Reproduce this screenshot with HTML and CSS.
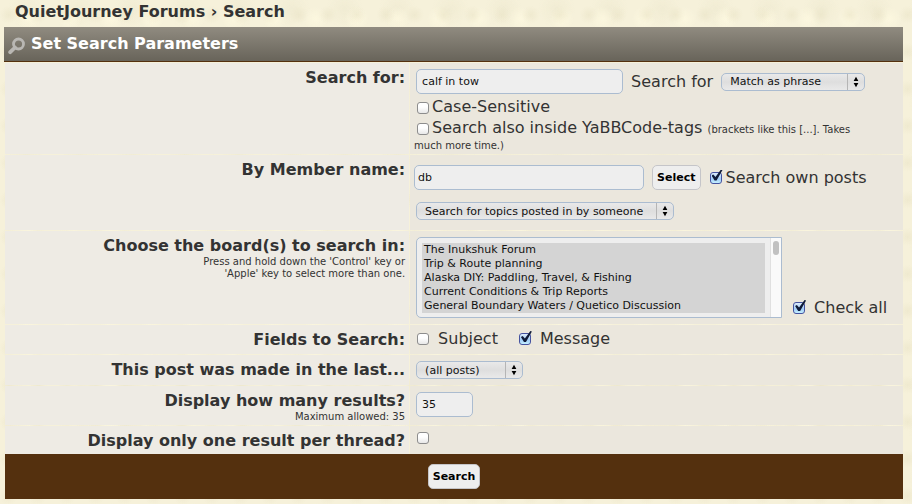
FILE: index.html
```html
<!DOCTYPE html>
<html lang="en">
<head>
    <meta charset="UTF-8">
    <meta name="viewport" content="width=device-width, initial-scale=1.0">
    <title>QuietJourney Forums - Search</title>
    <link rel="stylesheet" href="styles.css">
</head>
<body>
    <h1 class="breadcrumb">QuietJourney Forums › Search</h1>

    <form class="search-form">
        <h2 class="title-bar">
            <svg class="magnifier" width="18" height="18" viewBox="0 0 18 18">
                <circle cx="10.500" cy="7" r="5" fill="none" stroke="#b9b7b3" stroke-width="2.800"/>
                <path d="M7 10.500L2.200 15.200" stroke="#b9b7b3" stroke-width="3.800" stroke-linecap="round"/>
            </svg>
            Set Search Parameters
        </h2>

        <div class="row">
            <div class="name"><label for="search">Search for:</label></div>
            <div class="field search-field">
                <div class="line">
                    <input type="text" id="search" class="search-text" value="calf in tow">
                    <label for="searchtype">Search for</label>
                    <span class="dropdown match">
                        <select id="searchtype"><option>Match as phrase</option></select>
                        <svg class="arrows" width="17" height="16" viewBox="0 0 17 16"><path d="M8.500 2.500L11 7H6zM8.500 13.500L6 9H11z"/></svg>
                    </span>
                </div>
                <div class="check-line">
                    <input type="checkbox" id="casesensitive"><label for="casesensitive">Case-Sensitive</label>
                </div>
                <div class="check-line">
                    <input type="checkbox" id="yabbtags"><label for="yabbtags">Search also inside YaBBCode-tags <span class="small">(brackets like this [...]. Takes much more time.)</span></label>
                </div>
            </div>
        </div>

        <div class="row">
            <div class="name"><label for="member">By Member name:</label></div>
            <div class="field member-field">
                <div class="line">
                    <input type="text" id="member" class="member-text" value="db">
                    <button type="button">Select</button>
                    <span class="check">
                        <input type="checkbox" id="own" checked>
                        <label for="own">Search own posts</label>
                    </span>
                </div>
                <span class="dropdown topics">
                    <select aria-label="Topics to search"><option>Search for topics posted in by someone</option></select>
                    <svg class="arrows" width="17" height="16" viewBox="0 0 17 16"><path d="M8.500 2.500L11 7H6zM8.500 13.500L6 9H11z"/></svg>
                </span>
            </div>
        </div>

        <div class="row">
            <div class="name">
                <label for="boards">Choose the board(s) to search in:</label>
                <p class="small">Press and hold down the 'Control' key or<br>'Apple' key to select more than one.</p>
            </div>
            <div class="field boards-field">
                <div class="boards">
                    <select id="boards" multiple size="5">
                        <option selected>The Inukshuk Forum</option>
                        <option selected>Trip &amp; Route planning</option>
                        <option selected>Alaska DIY: Paddling, Travel, &amp; Fishing</option>
                        <option selected>Current Conditions &amp; Trip Reports</option>
                        <option selected>General Boundary Waters / Quetico Discussion</option>
                    </select>
                    <span class="scroll"></span>
                </div>
                <span class="check">
                    <input type="checkbox" id="checkall" checked>
                    <label for="checkall">Check all</label>
                </span>
            </div>
        </div>

        <div class="row">
            <div class="name">Fields to Search:</div>
            <div class="field fields-field">
                <span class="check">
                    <input type="checkbox" id="subject">
                    <label for="subject">Subject</label>
                </span>
                <span class="check">
                    <input type="checkbox" id="message" checked>
                    <label for="message">Message</label>
                </span>
            </div>
        </div>

        <div class="row">
            <div class="name"><label for="age">This post was made in the last...</label></div>
            <div class="field">
                <span class="dropdown age">
                    <select id="age"><option>(all posts)</option></select>
                    <svg class="arrows" width="17" height="16" viewBox="0 0 17 16"><path d="M8.500 2.500L11 7H6zM8.500 13.500L6 9H11z"/></svg>
                </span>
            </div>
        </div>

        <div class="row">
            <div class="name">
                <label for="numberreturned">Display how many results?</label>
                <p class="small">Maximum allowed: 35</p>
            </div>
            <div class="field">
                <input type="text" id="numberreturned" class="number-text" value="35">
            </div>
        </div>

        <div class="row">
            <div class="name"><label for="onethread">Display only one result per thread?</label></div>
            <div class="field thread-field"><input type="checkbox" id="onethread"></div>
        </div>

        <div class="submit-bar">
            <button type="submit">Search</button>
        </div>
    </form>
</body>
</html>
```
FILE: styles.css
```css
* {
    box-sizing: border-box;
}
body {
    margin: 0;
    padding: 0 9px 5px 5px;
    font-family: Verdana, "DejaVu Sans", sans-serif;
    font-size: 16px;
    line-height: 20px;
    color: #333;
    /* mottled parchment */
    background-color: #f6f1da;
    background-image:
        radial-gradient(circle at 30% 40%, rgba(232, 226, 196, 0.5), transparent 30%),
        radial-gradient(circle at 70% 60%, rgba(255, 250, 225, 0.7), transparent 35%),
        radial-gradient(circle at 50% 20%, rgba(236, 231, 205, 0.5), transparent 40%);
    background-size: 29px 37px, 41px 31px, 53px 47px;
}
.breadcrumb {
    margin: 0;
    padding: 2px 10px 5px;
    font-size: 16px;
    line-height: 20px;
}
.title-bar {
    display: flex;
    align-items: center;
    gap: 5px;
    height: 35px;
    margin: 0 0 1px -1px;
    padding: 0 4px;
    font-size: 16px;
    color: #fff;
    background: linear-gradient(#908b80, #68645a);
    border-bottom: 1px solid #54300e;
}
.magnifier {
    position: relative;
    top: 2px;
}
.row {
    display: grid;
    grid-template-columns: 45% 1fr;
    gap: 1px;
    margin-bottom: 1px;
}
.row:nth-last-child(2) {
    margin-bottom: 0;
}
.name {
    padding: 5px 4px 2px;
    text-align: right;
    font-weight: bold;
    background-color: #eeebe4;
}
.field {
    padding: 6px;
    background-color: #ebe7dd;
}
.small {
    margin: 0;
    font-size: 10px;
    line-height: 12px;
    font-weight: normal;
}
.line {
    display: flex;
    align-items: center;
    gap: 8px;
}
input[type="text"] {
    height: 25px;
    padding: 0 5px;
    font-family: inherit;
    font-size: 11px;
    color: #111;
    background-color: #eee;
    border: 1px solid #abbcd0;
    border-radius: 5px;
}
input.search-text {
    width: 207px;
}
input.member-text {
    width: 230px;
    padding: 0 3px;
}
input.number-text {
    display: block;
    width: 57px;
}
button {
    height: 25px;
    padding: 0 4px;
    font-family: inherit;
    font-size: 11px;
    font-weight: bold;
    color: #000;
    background-color: #eee;
    border: 1px solid #c5c5c9;
    border-radius: 5px;
}
input[type="checkbox"] {
    appearance: none;
    position: relative;
    flex: none;
    width: 12px;
    height: 12px;
    margin: 0 3px 0 1px;
    vertical-align: -2px;
    background: linear-gradient(#fff, #fff 40%, #e8e8e8);
    border: 1px solid #8d8d8d;
    border-radius: 3px;
}
input[type="checkbox"]:checked {
    background: linear-gradient(#dcebfb, #a2cdf8 60%, #c4f0ff);
    border-color: #4553a0;
}
input[type="checkbox"]:checked::after {
    content: "";
    position: absolute;
    left: 1px;
    top: -3px;
    width: 11px;
    height: 11px;
    background-color: #101b38;
    clip-path: polygon(0 55%, 16% 46%, 36% 68%, 86% 0, 100% 4%, 46% 100%, 28% 100%);
}
.dropdown {
    position: relative;
    display: block;
    height: 18px;
}
.dropdown select {
    appearance: none;
    display: block;
    width: 100%;
    height: 18px;
    padding: 0 18px 0 8px;
    font-family: inherit;
    font-size: 11px;
    color: #111;
    background: linear-gradient(#e9e9e9, #dedede 50%, #e9e9e9);
    border: 1px solid #abbcd0;
    border-radius: 5px;
}
.arrows {
    position: absolute;
    right: 1px;
    top: 1px;
    border-left: 1px solid #b5b5b5;
    pointer-events: none;
}
.match {
    width: 144px;
}
.topics {
    width: 258px;
    margin: 12px 0 4px 2px;
}
.age {
    width: 107px;
}
.search-field {
    padding-bottom: 2px;
}
.check-line {
    margin: 5px 0 0 -2px;
    padding-right: 24px;
    line-height: 16px;
}
.check-line input[type="checkbox"] {
    margin-left: 3px;
}
.check {
    display: flex;
    align-items: center;
    gap: 1px;
}
.member-field {
    padding: 10px 4px 6px;
}
.boards-field {
    display: flex;
    align-items: flex-end;
    gap: 10px;
}
.boards-field .check,
.fields-field .check {
    gap: 6px;
}
.boards {
    position: relative;
    width: 366px;
}
.boards select {
    display: block;
    width: 100%;
    height: 81px;
    padding: 5px 16px 5px 5px;
    overflow: hidden;
    font-family: inherit;
    font-size: 11px;
    background-color: #eee;
    border: 1px solid #abbcd0;
    border-radius: 5px 0 0 5px;
}
.boards option {
    height: 14px;
    min-height: 14px;
    padding: 0 2px;
    line-height: 14px;
    color: #111;
    background: linear-gradient(#d4d4d4, #d4d4d4);
}
.scroll {
    position: absolute;
    top: 1px;
    right: 1px;
    bottom: 1px;
    width: 11px;
    background-color: #fafafa;
    border-left: 1px solid #e0e0e0;
}
.scroll::before {
    content: "";
    display: block;
    width: 6px;
    height: 14px;
    margin: 3px 0 0 2px;
    background-color: #c1c1c1;
    border-radius: 3px;
}
.fields-field {
    display: flex;
    gap: 20px;
    padding: 4px 6px 5px;
}
.thread-field {
    display: flex;
    padding-bottom: 10px;
}
.submit-bar {
    display: flex;
    justify-content: center;
    align-items: center;
    height: 45px;
    background-color: #54300e;
}
```
